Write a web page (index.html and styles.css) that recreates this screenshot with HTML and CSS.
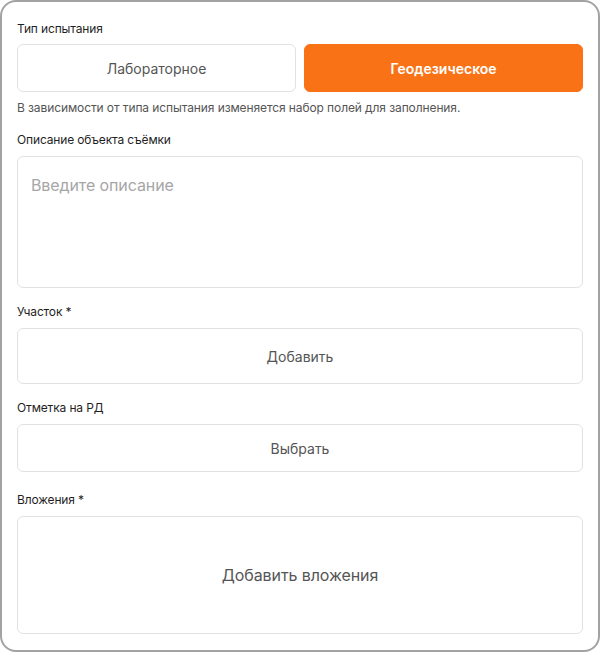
FILE: index.html
```html
<!DOCTYPE html>
<html lang="ru">
<head>
<meta charset="utf-8">
<link rel="stylesheet" href="styles.css">
</head>
<body>
<div class="frame">
  <div class="field">
    <div class="label label-tight">Тип испытания</div>
    <div class="toggle">
      <div class="opt">Лабораторное</div>
      <div class="opt active">Геодезическое</div>
    </div>
    <div class="hint">В зависимости от типа испытания изменяется набор полей для заполнения.</div>
  </div>
  <div class="field">
    <div class="label">Описание объекта съёмки</div>
    <div class="textarea">Введите описание</div>
  </div>
  <div class="field">
    <div class="label">Участок *</div>
    <div class="box box-56">Добавить</div>
  </div>
  <div class="field">
    <div class="label">Отметка на РД</div>
    <div class="box box-48">Выбрать</div>
  </div>
  <div class="field field-last">
    <div class="label">Вложения *</div>
    <div class="box box-attach">Добавить вложения</div>
  </div>
</div>
</body>
</html>
```
FILE: styles.css
```css
html, body {
  margin: 0;
  padding: 0;
  background: #ffffff;
}
body {
  font-family: Inter, "Noto Sans", sans-serif;
  color: #222;
}
.frame {
  box-sizing: border-box;
  width: 600px;
  height: 652px;
  border: 2px solid #a3a3a3;
  border-radius: 16px;
  padding: 19px 15px 16px;
  display: flex;
  flex-direction: column;
}
.field {
  display: flex;
  flex-direction: column;
  margin-bottom: 16px;
}
.field-last {
  margin-top: 4px;
  margin-bottom: 0;
}
.label {
  font-size: 12px;
  line-height: 16px;
  letter-spacing: -0.15px;
  color: #1f1f1f;
  margin-bottom: 8px;
}
.label-tight {
  margin-bottom: 7px;
}
.toggle {
  display: flex;
  gap: 8px;
}
.opt {
  flex: 1;
  box-sizing: border-box;
  height: 48px;
  border: 1px solid #e2e2e2;
  border-radius: 6px;
  display: flex;
  align-items: center;
  justify-content: center;
  font-size: 14px;
  color: #555;
}
.opt.active {
  background: #f97316;
  border-color: #f97316;
  color: #fff;
  font-weight: 600;
}
.hint {
  margin-top: 8px;
  font-size: 12px;
  line-height: 16px;
  letter-spacing: -0.1px;
  color: #555;
}
.textarea {
  box-sizing: border-box;
  height: 132px;
  border: 1px solid #e2e2e2;
  border-radius: 6px;
  padding: 16px 13px;
  font-size: 16px;
  line-height: 24px;
  letter-spacing: -0.1px;
  color: #a6a6a6;
}
.box {
  box-sizing: border-box;
  border: 1px solid #e2e2e2;
  border-radius: 6px;
  display: flex;
  align-items: center;
  justify-content: center;
  font-size: 14px;
  color: #555;
}
.box-56 { height: 56px; }
.box-48 { height: 48px; }
.box-attach {
  height: 118px;
  font-size: 16px;
  letter-spacing: -0.1px;
}
```
